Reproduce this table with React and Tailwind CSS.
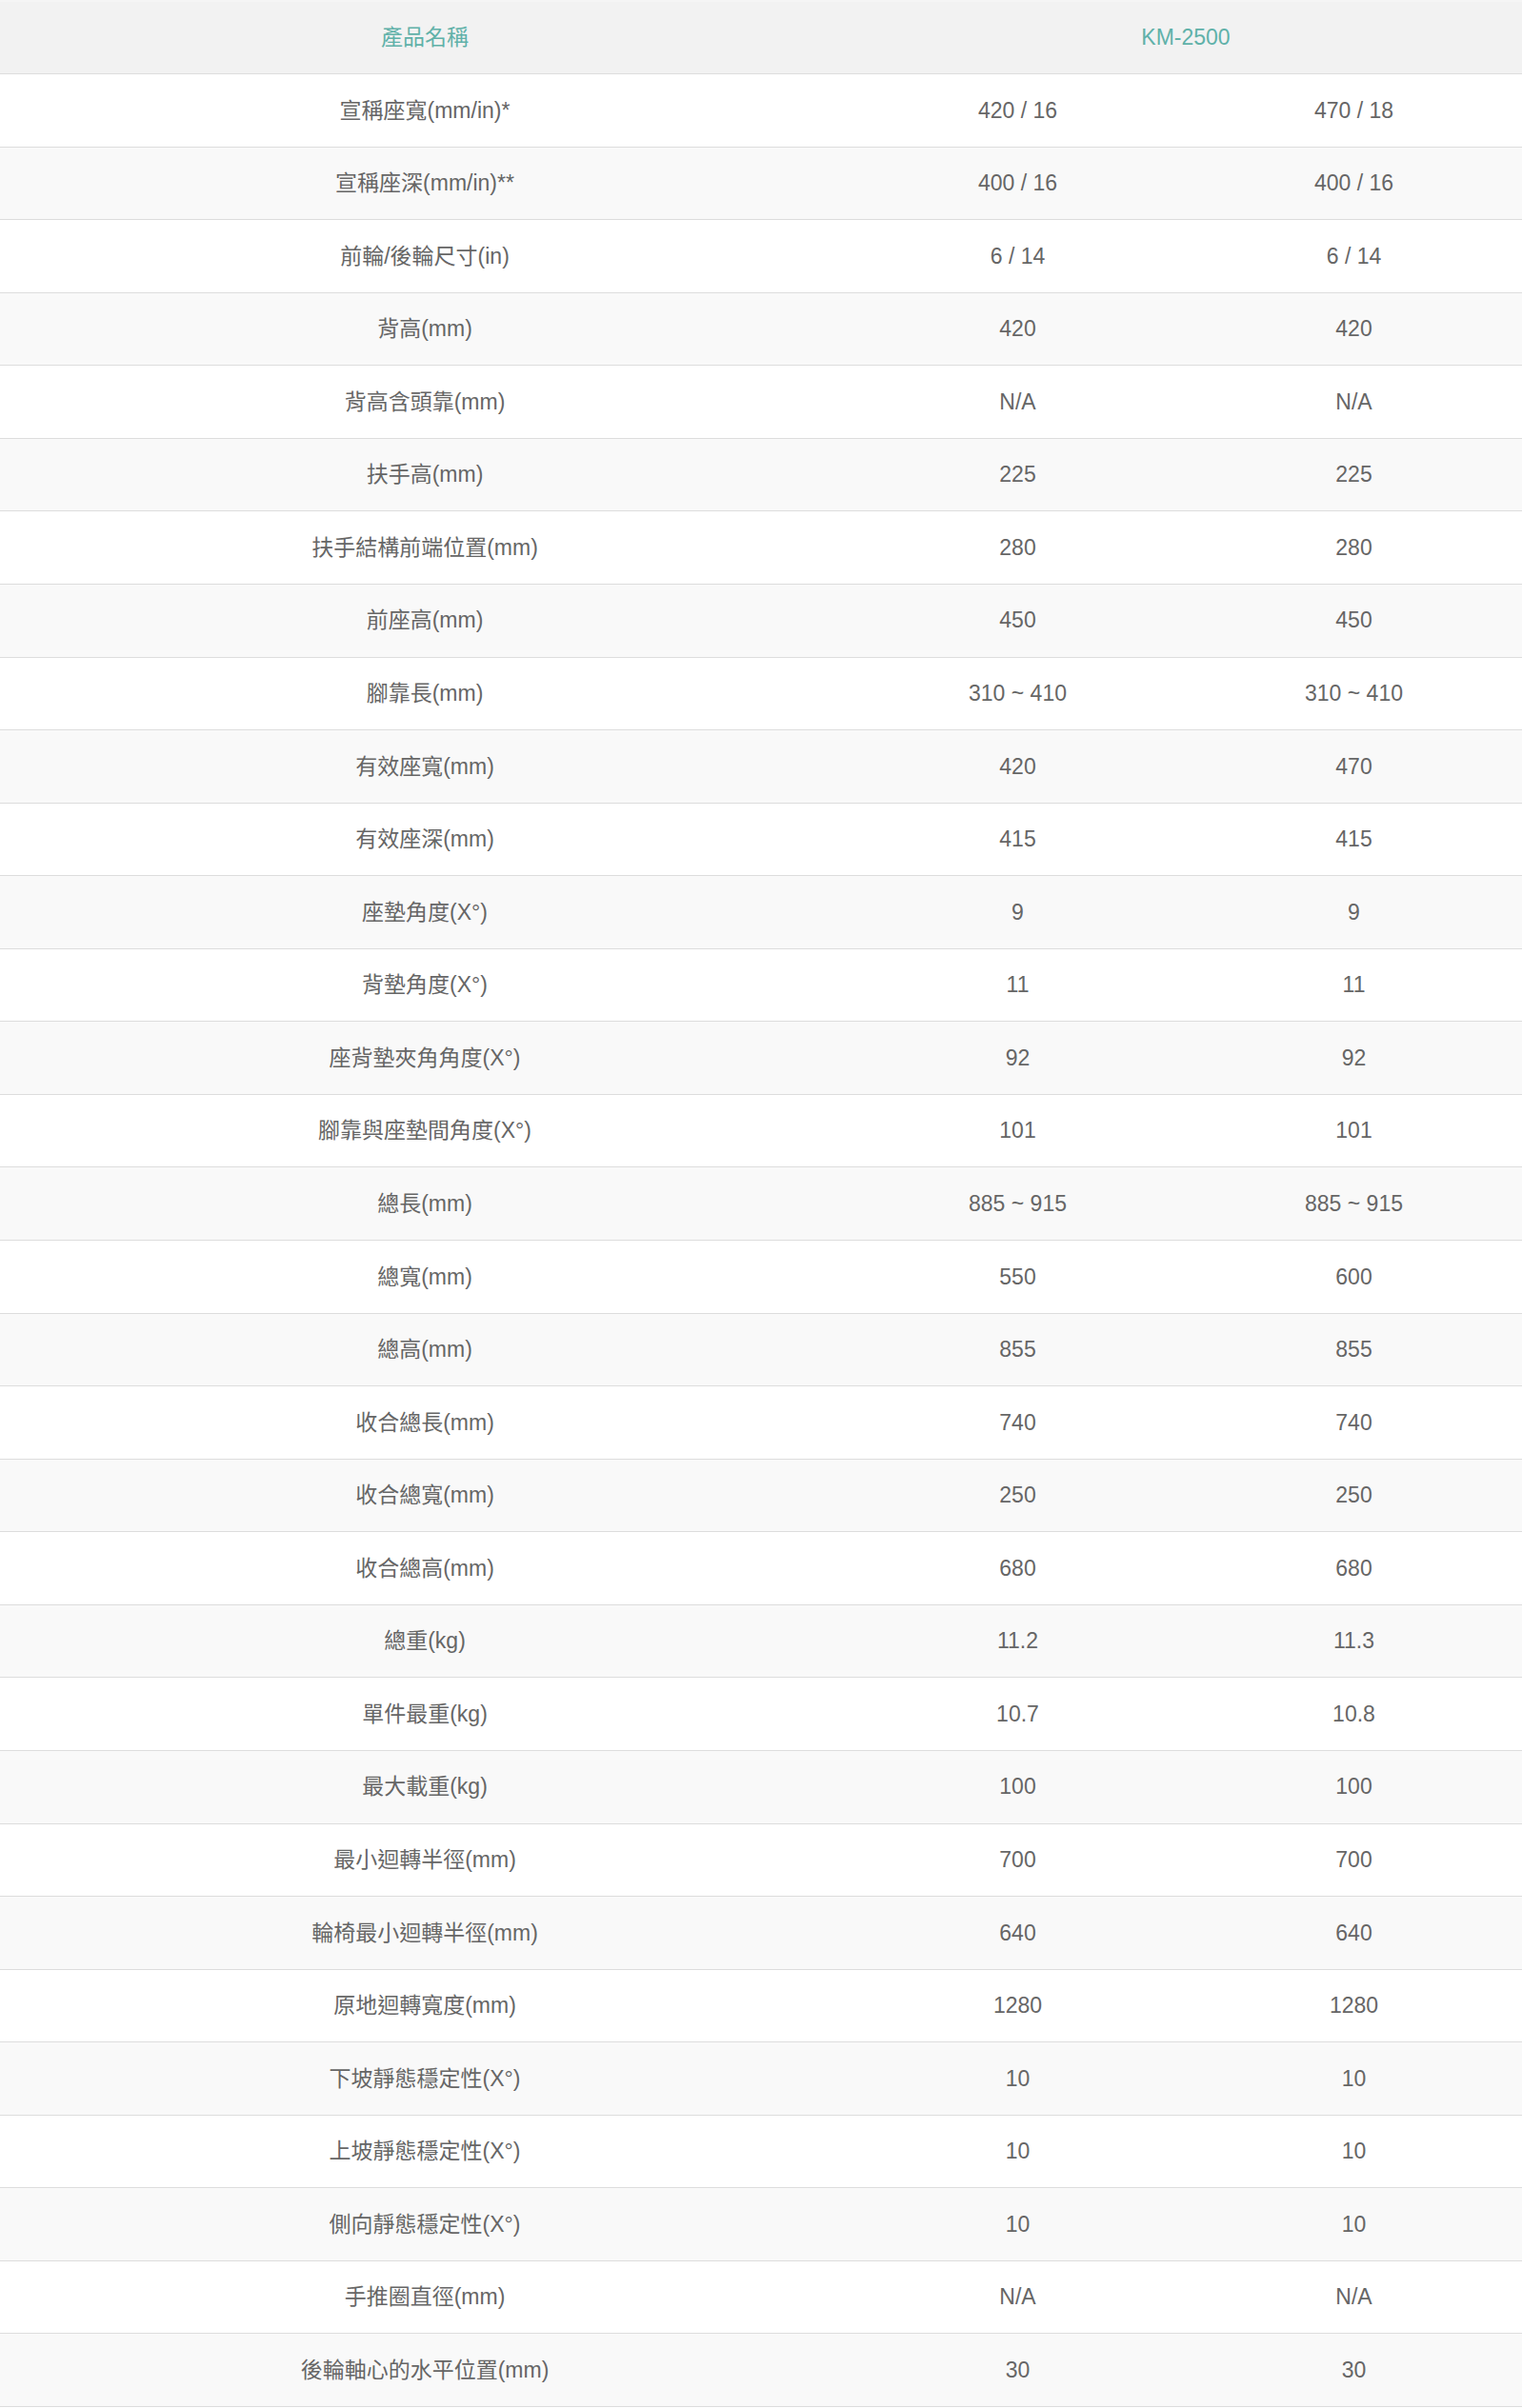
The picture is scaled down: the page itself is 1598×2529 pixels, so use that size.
// Spec table for KM-2500 — one label column, two size variants.

const SPECS = [
  ['宣稱座寬(mm/in)*', '420 / 16', '470 / 18'],
  ['宣稱座深(mm/in)**', '400 / 16', '400 / 16'],
  ['前輪/後輪尺寸(in)', '6 / 14', '6 / 14'],
  ['背高(mm)', '420', '420'],
  ['背高含頭靠(mm)', 'N/A', 'N/A'],
  ['扶手高(mm)', '225', '225'],
  ['扶手結構前端位置(mm)', '280', '280'],
  ['前座高(mm)', '450', '450'],
  ['腳靠長(mm)', '310 ~ 410', '310 ~ 410'],
  ['有效座寬(mm)', '420', '470'],
  ['有效座深(mm)', '415', '415'],
  ['座墊角度(X°)', '9', '9'],
  ['背墊角度(X°)', '11', '11'],
  ['座背墊夾角角度(X°)', '92', '92'],
  ['腳靠與座墊間角度(X°)', '101', '101'],
  ['總長(mm)', '885 ~ 915', '885 ~ 915'],
  ['總寬(mm)', '550', '600'],
  ['總高(mm)', '855', '855'],
  ['收合總長(mm)', '740', '740'],
  ['收合總寬(mm)', '250', '250'],
  ['收合總高(mm)', '680', '680'],
  ['總重(kg)', '11.2', '11.3'],
  ['單件最重(kg)', '10.7', '10.8'],
  ['最大載重(kg)', '100', '100'],
  ['最小迴轉半徑(mm)', '700', '700'],
  ['輪椅最小迴轉半徑(mm)', '640', '640'],
  ['原地迴轉寬度(mm)', '1280', '1280'],
  ['下坡靜態穩定性(X°)', '10', '10'],
  ['上坡靜態穩定性(X°)', '10', '10'],
  ['側向靜態穩定性(X°)', '10', '10'],
  ['手推圈直徑(mm)', 'N/A', 'N/A'],
  ['後輪軸心的水平位置(mm)', '30', '30'],
];

export default function App() {
  return (
    <div
      className="w-[1598px] bg-white text-[23px] text-[#666]"
      style={{ fontFamily: '"Liberation Sans", "Noto Sans CJK TC", sans-serif' }}
    >
      {/* Header row */}
      <div className="grid grid-cols-[892px_706px] h-[78px] bg-[#f2f2f2] border-t-2 border-[#f5f5f5] border-b border-b-[#dddddd] text-[#60b1a9]">
        <div className="flex items-center justify-center">產品名稱</div>
        <div className="flex items-center justify-center">KM-2500</div>
      </div>

      {/* Data rows, striped */}
      {SPECS.map(([label, a, b], i) => (
        <div
          key={label}
          className={`grid grid-cols-[892px_353px_353px] h-[76.5625px] border-b border-[#dddddd] ${
            i % 2 === 1 ? 'bg-[#f9f9f9]' : 'bg-white'
          }`}
        >
          <div className="flex items-center justify-center">{label}</div>
          <div className="flex items-center justify-center">{a}</div>
          <div className="flex items-center justify-center">{b}</div>
        </div>
      ))}
    </div>
  );
}
